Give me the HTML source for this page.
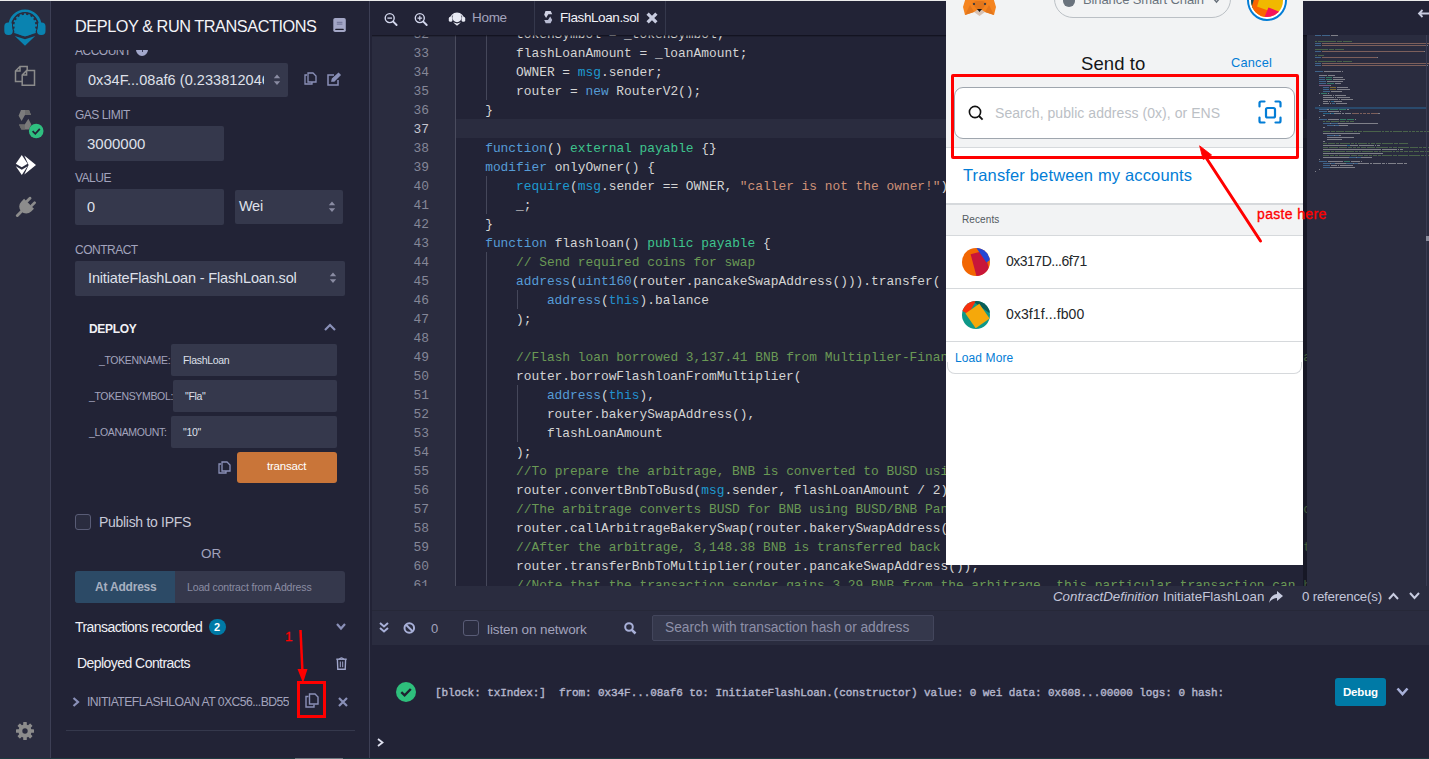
<!DOCTYPE html>
<html><head><meta charset="utf-8">
<style>
*{margin:0;padding:0;box-sizing:border-box}
html,body{width:1429px;height:759px;overflow:hidden;background:#222336;font-family:"Liberation Sans",sans-serif}
.a{position:absolute}
.t{position:absolute;white-space:nowrap;line-height:1}
.inp{position:absolute;background:#35384c;border-radius:2px}
.lbl{color:#a2a3bd;font-size:12px;letter-spacing:-0.5px}
.wt{color:#dfe0ea}
svg{position:absolute;overflow:visible}
.ln{position:absolute;left:0;width:59px;text-align:right;font-family:"Liberation Mono",monospace;font-size:12.9px;line-height:19px;white-space:pre}
.cl{position:absolute;left:84.3px;font-family:"Liberation Mono",monospace;font-size:12.87px;line-height:19px;white-space:pre;color:#d4d4d4}
</style></head><body>
<!-- frame -->
<div class="a" style="left:0;top:0;width:1429px;height:1px;background:#ececec"></div>
<div class="a" style="left:0;top:1px;width:50px;height:758px;background:#2a2c3f"></div>
<div class="a" style="left:50px;top:1px;width:1px;height:758px;background:#3d3f55"></div>
<div class="a" style="left:369px;top:1px;width:1px;height:758px;background:#3d3f55"></div>
<div class="a" style="left:0;top:758px;width:1429px;height:1px;background:#1f3a40"></div>
<div class="a" style="left:295px;top:758px;width:48px;height:1px;background:#6b7a80"></div>

<!-- icon bar -->
<svg style="left:0;top:0" width="50" height="50" viewBox="0 0 50 50">
  <path d="M9.8 26 A15.2 15.2 0 0 1 40.2 26" fill="none" stroke="#0a83b0" stroke-width="2.6"/>
  <rect x="4.3" y="22.5" width="8.5" height="12.5" rx="4" fill="#0a83b0"/>
  <rect x="37" y="22.5" width="8.5" height="12.5" rx="4" fill="#0a83b0"/>
  <circle cx="25" cy="25.6" r="13" fill="#2a2c3f"/>
  <g fill="#0a83b0"><circle cx="25" cy="25.4" r="10.6"/><rect x="23.9" y="13.4" width="2.2" height="2.4" transform="rotate(-112.5 25 25.4)"/><rect x="23.9" y="13.4" width="2.2" height="2.4" transform="rotate(-90 25 25.4)"/><rect x="23.9" y="13.4" width="2.2" height="2.4" transform="rotate(-67.5 25 25.4)"/><rect x="23.9" y="13.4" width="2.2" height="2.4" transform="rotate(-45 25 25.4)"/><rect x="23.9" y="13.4" width="2.2" height="2.4" transform="rotate(-22.5 25 25.4)"/><rect x="23.9" y="13.4" width="2.2" height="2.4" transform="rotate(0 25 25.4)"/><rect x="23.9" y="13.4" width="2.2" height="2.4" transform="rotate(22.5 25 25.4)"/><rect x="23.9" y="13.4" width="2.2" height="2.4" transform="rotate(45 25 25.4)"/><rect x="23.9" y="13.4" width="2.2" height="2.4" transform="rotate(67.5 25 25.4)"/><rect x="23.9" y="13.4" width="2.2" height="2.4" transform="rotate(90 25 25.4)"/><rect x="23.9" y="13.4" width="2.2" height="2.4" transform="rotate(112.5 25 25.4)"/>
  <path d="M14.6 28 L14.2 33 L25 36.6 L35.8 33 L35.4 28 Z"/>
  <path d="M14.8 36 L25 39.2 L35.2 36 L25 45.8 Z"/></g>
</svg>
<svg style="left:0;top:50px" width="50" height="50" viewBox="0 50 50 50" fill="none" stroke="#8c8c8c" stroke-width="1.5">
  <path d="M15.5 71 L20 66.5 L27.2 66.5 L27.2 81.5 L15.5 81.5 Z M15.5 71 L20 71 L20 66.5"/>
  <path d="M22.2 75 L26.6 70.5 L34.5 70.5 L34.5 85.3 L22.2 85.3 Z M22.2 75 L26.6 75 L26.6 70.5" fill="#2a2c3f"/>
</svg>
<svg style="left:0;top:100px" width="50" height="45" viewBox="0 100 50 45">
  <path d="M21 110 L29 110 L31 115 L25 115 L21.6 121 L18.6 115.8 Z" fill="#7c7c7c"/>
  <path d="M25 110 L29 110 L31 115 L25 115 Z" fill="#6c6c6c"/>
  <path d="M28.4 118.7 L31.3 124.5 L28.8 129.6 L21.4 129.6 L19 124.6 L24.7 124.6 Z" fill="#7a7a7a"/>
  <path d="M19 124.6 L24.7 124.6 L25 129.6 L21.4 129.6 Z" fill="#6a6a6a"/>
  <circle cx="36.2" cy="131" r="7.3" fill="#2fbf80"/>
  <path d="M32.6 131.2 L35.3 133.8 L39.8 128.8" fill="none" stroke="#222336" stroke-width="1.8"/>
</svg>
<svg style="left:0;top:150px" width="50" height="30" viewBox="0 150 50 30">
  <path d="M21.8 155 L27.6 163.8 L21.8 167.2 L15.8 163.8 Z" fill="#fff"/>
  <path d="M15.8 166.2 L21.8 169.8 L27.6 166.2 L21.8 175 Z" fill="#fff"/>
  <path d="M24.3 155.5 L36 165 L24.3 174.5 L28.6 165 Z" fill="#fff"/>
</svg>
<svg style="left:0;top:190px" width="50" height="35" viewBox="0 190 50 35">
  <g transform="rotate(45 24.8 208)" fill="#8c8c8c">
    <rect x="20.2" y="196" width="2.8" height="7" rx="1.2"/><rect x="26.6" y="196" width="2.8" height="7" rx="1.2"/>
    <path d="M17.8 202 L31.8 202 L31.8 206 A7 7 0 0 1 24.8 213 A7 7 0 0 1 17.8 206 Z"/>
    <rect x="23.4" y="211" width="2.8" height="9" rx="1.2"/>
  </g>
</svg>
<svg style="left:0;top:715px" width="50" height="30" viewBox="0 715 50 30">
  <g fill="#8c8c8c"><circle cx="25" cy="731" r="6.6"/>
  <g id="gt"><rect x="23.2" y="722" width="3.6" height="4" rx="0.6"/></g>
  <use href="#gt" transform="rotate(45 25 731)"/><use href="#gt" transform="rotate(90 25 731)"/><use href="#gt" transform="rotate(135 25 731)"/>
  <use href="#gt" transform="rotate(180 25 731)"/><use href="#gt" transform="rotate(225 25 731)"/><use href="#gt" transform="rotate(270 25 731)"/><use href="#gt" transform="rotate(315 25 731)"/></g>
  <circle cx="25" cy="731" r="2.7" fill="#2a2c3f"/>
</svg>

<!-- side panel -->
<div class="a" style="left:51px;top:50px;width:318px;height:12px;overflow:hidden">
 <div class="t lbl" style="left:24px;top:-5px">ACCOUNT</div>
 <div class="a" style="left:85px;top:-7px;width:12px;height:13px;border-radius:50%;background:#a3a8cc"></div><div class="a" style="left:90.5px;top:-2px;width:1.4px;height:4px;background:#3a3d58"></div>
</div>
<div class="t wt" style="left:75px;top:18px;font-size:16.3px;letter-spacing:-0.45px;color:#f4f4f8">DEPLOY &amp; RUN TRANSACTIONS</div>
<svg style="left:333px;top:18px" width="13" height="14" viewBox="0 0 13 14"><rect x="0.3" y="0" width="12.5" height="14" rx="1.8" fill="#a3a6c6"/><rect x="3.8" y="3.8" width="5.6" height="1" fill="#6d7094"/><rect x="3.8" y="5.6" width="5.6" height="1" fill="#6d7094"/><rect x="2.2" y="10.8" width="8.6" height="1.3" rx="0.6" fill="#1c1d2c"/></svg>

<div class="inp" style="left:76px;top:63px;width:212px;height:34px"></div>
<div class="a" style="left:88px;top:70px;width:176px;height:20px;overflow:hidden"><div class="t wt" style="left:0;top:3px;font-size:14.5px;letter-spacing:0.05px">0x34F...08af6 (0.233812046</div></div>
<svg style="left:274px;top:74px" width="6" height="12" viewBox="0 0 6 12"><path d="M-0.2 4.3 L3 0.6 L6.2 4.3 Z M-0.2 7.3 L3 11 L6.2 7.3 Z" fill="#8a8ca3"/></svg>
<svg style="left:304px;top:72px" width="13" height="13" viewBox="0 0 13 13" fill="none" stroke="#8a90b8" stroke-width="1.3"><path d="M3 3 L1 3 L1 12 L8 12 L8 10"/><path d="M4 1 L9 1 L12 4 L12 10 L4 10 Z"/></svg>
<svg style="left:327px;top:73px" width="14" height="13" viewBox="0 0 14 13" fill="none" stroke="#8a90b8" stroke-width="1.5"><path d="M7 2 L1 2 L1 12 L11 12 L11 7"/><path d="M5 8 L5.5 6 L11.5 0.5 L13 2 L7 8 Z" fill="#8a90b8"/></svg>

<div class="t lbl" style="left:75px;top:109px">GAS LIMIT</div>
<div class="inp" style="left:75px;top:126px;width:149px;height:35px"></div>
<div class="t wt" style="left:87px;top:136px;font-size:15px">3000000</div>

<div class="t lbl" style="left:75px;top:172px">VALUE</div>
<div class="inp" style="left:75px;top:189px;width:149px;height:36px"></div>
<div class="t wt" style="left:87px;top:200px;font-size:14.5px">0</div>
<div class="inp" style="left:235px;top:190px;width:108px;height:34px"></div>
<div class="t wt" style="left:239px;top:199px;font-size:14.5px;letter-spacing:-0.3px">Wei</div>
<svg style="left:329px;top:201px" width="6" height="12" viewBox="0 0 6 12"><path d="M-0.2 4.3 L3 0.6 L6.2 4.3 Z M-0.2 7.3 L3 11 L6.2 7.3 Z" fill="#8a8ca3"/></svg>

<div class="t lbl" style="left:75px;top:244px">CONTRACT</div>
<div class="inp" style="left:75px;top:261px;width:270px;height:35px"></div>
<div class="t wt" style="left:88px;top:271px;font-size:14.5px;letter-spacing:-0.15px">InitiateFlashLoan - FlashLoan.sol</div>
<svg style="left:330px;top:272px" width="6" height="12" viewBox="0 0 6 12"><path d="M-0.2 4.3 L3 0.6 L6.2 4.3 Z M-0.2 7.3 L3 11 L6.2 7.3 Z" fill="#8a8ca3"/></svg>

<div class="t" style="left:89px;top:323px;font-size:12px;font-weight:bold;color:#f0f0f5;letter-spacing:-0.3px">DEPLOY</div>
<svg style="left:324px;top:323px" width="12" height="8" viewBox="0 0 12 8"><path d="M1 7 L6 2 L11 7" fill="none" stroke="#8a90b8" stroke-width="2.2"/></svg>

<div class="t lbl" style="left:99px;top:355px;font-size:10.5px;letter-spacing:-0.35px">_TOKENNAME:</div>
<div class="inp" style="left:171px;top:344px;width:166px;height:32px"></div>
<div class="t wt" style="left:183px;top:355px;font-size:10.5px;letter-spacing:-0.3px">FlashLoan</div>
<div class="t lbl" style="left:89px;top:391px;font-size:10.5px;letter-spacing:-0.35px">_TOKENSYMBOL:</div>
<div class="inp" style="left:173px;top:380px;width:164px;height:32px"></div>
<div class="t wt" style="left:185px;top:391px;font-size:10.5px;letter-spacing:-0.3px">"Fla"</div>
<div class="t lbl" style="left:89px;top:427px;font-size:10.5px;letter-spacing:-0.35px">_LOANAMOUNT:</div>
<div class="inp" style="left:171px;top:416px;width:166px;height:32px"></div>
<div class="t wt" style="left:183px;top:427px;font-size:10.5px;letter-spacing:-0.3px">"10"</div>

<svg style="left:218px;top:461px" width="13" height="13" viewBox="0 0 13 13" fill="none" stroke="#8a90b8" stroke-width="1.3"><path d="M3 3 L1 3 L1 12 L8 12 L8 10"/><path d="M4 1 L9 1 L12 4 L12 10 L4 10 Z"/></svg>
<div class="a" style="left:237px;top:452px;width:100px;height:31px;background:#c97539;border-radius:3px"></div>
<div class="t" style="left:267px;top:461px;font-size:11.5px;color:#fff;letter-spacing:-0.2px">transact</div>

<div class="a" style="left:75px;top:514px;width:16px;height:16px;border:1px solid #595c76;border-radius:3px;background:#2a2c3f"></div>
<div class="t wt" style="left:99px;top:515px;font-size:14px;letter-spacing:-0.3px;color:#c8c9d8">Publish to IPFS</div>
<div class="t" style="left:201px;top:547px;font-size:13.5px;color:#a2a3bd">OR</div>

<div class="a" style="left:75px;top:571px;width:270px;height:32px;background:#35384c;border-radius:3px"></div>
<div class="a" style="left:75px;top:571px;width:100px;height:32px;background:#2c4a66;border-radius:3px 0 0 3px"></div>
<div class="t" style="left:95px;top:581px;font-size:12px;font-weight:bold;color:#a8b0c0;letter-spacing:-0.2px">At Address</div>
<div class="t" style="left:187px;top:582px;font-size:10.5px;color:#8a8ca3;letter-spacing:-0.15px">Load contract from Address</div>

<div class="t wt" style="left:75px;top:620px;font-size:14px;letter-spacing:-0.55px;color:#f0f0f5">Transactions recorded</div>
<div class="a" style="left:209px;top:619px;width:17px;height:16px;border-radius:8px;background:#007aa6"></div>
<div class="t" style="left:214px;top:622px;font-size:11px;font-weight:bold;color:#fff">2</div>
<svg style="left:336px;top:623px" width="10" height="8" viewBox="0 0 10 8"><path d="M1 1 L5 5.5 L9 1" fill="none" stroke="#8a90b8" stroke-width="2.2"/></svg>

<div class="t wt" style="left:77px;top:656px;font-size:14px;letter-spacing:-0.55px;color:#f0f0f5">Deployed Contracts</div>
<svg style="left:336px;top:656px" width="11" height="14" viewBox="0 0 11 14" fill="none" stroke="#a0a6cc"><path d="M0.3 3.2 L10.7 3.2" stroke-width="1.4"/><path d="M3.3 3.2 Q5.5 0.6 7.7 3.2" stroke-width="1.3"/><path d="M1.4 3.5 L1.8 13.2 L9.2 13.2 L9.6 3.5" stroke-width="1.4"/><path d="M4.3 5.5 L4.3 11.2 M6.7 5.5 L6.7 11.2" stroke-width="1"/></svg>

<svg style="left:72px;top:697px" width="8" height="10" viewBox="0 0 8 10"><path d="M1.5 1 L6 5 L1.5 9" fill="none" stroke="#8a90b8" stroke-width="2.2"/></svg>
<div class="a" style="left:87px;top:692px;width:202px;height:18px;overflow:hidden"><div class="t" style="left:0;top:4px;font-size:12.2px;color:#a2a3bd;letter-spacing:-0.55px">INITIATEFLASHLOAN AT 0XC56...BD55E</div></div>
<svg style="left:305px;top:693px" width="14" height="15" viewBox="0 0 14 15" fill="none" stroke="#8a90b8" stroke-width="1.4"><path d="M3.5 3.5 L1 3.5 L1 14 L9 14 L9 11.5"/><path d="M4.5 1 L10 1 L13 4 L13 11 L4.5 11 Z"/></svg>
<svg style="left:338px;top:697px" width="10" height="10" viewBox="0 0 10 10"><path d="M1 1 L9 9 M9 1 L1 9" stroke="#8a90b8" stroke-width="2.2"/></svg>
<div class="a" style="left:66px;top:730px;width:289px;height:1px;background:#35384c"></div>

<!-- annotation 1 -->
<div class="a" style="left:297px;top:681px;width:29px;height:37px;border:3px solid #ff0000"></div>
<div class="t" style="left:285px;top:630px;font-size:13.5px;color:#ff0000;-webkit-text-stroke:0.3px #ff0000">1</div>
<svg style="left:295px;top:629px" width="15" height="55" viewBox="0 0 15 55"><path d="M5.5 1 L7.5 44" stroke="#ff0000" stroke-width="2.5"/><path d="M2.5 40 L12.5 40 L8 54 Z" fill="#ff0000"/></svg>

<!-- editor -->
<div class="a" style="left:370px;top:1px;width:1059px;height:758px;background:#222336"></div>
<!-- tab bar -->
<div class="a" style="left:370px;top:1px;width:1059px;height:34px;background:#222336"></div>
<svg style="left:380px;top:8px" width="20" height="20" viewBox="380 8 20 20" fill="none" stroke="#d4d8ee"><circle cx="389.7" cy="18.1" r="4.5" stroke-width="1.4"/><path d="M387.4 18.1 L392 18.1" stroke-width="1.3"/><path d="M393.2 21.6 L396.6 25" stroke-width="1.9" stroke-linecap="round"/></svg>
<svg style="left:410px;top:8px" width="20" height="20" viewBox="410 8 20 20" fill="none" stroke="#d4d8ee"><circle cx="419.8" cy="18.1" r="4.5" stroke-width="1.4"/><path d="M417.5 18.1 L422.1 18.1 M419.8 15.8 L419.8 20.4" stroke-width="1.2"/><path d="M423.3 21.6 L426.7 25" stroke-width="1.9" stroke-linecap="round"/></svg>
<svg style="left:440px;top:0" width="30" height="30" viewBox="440 0 30 30">
  <path d="M450.2 20 A6.8 6.8 0 0 1 463.8 20" fill="none" stroke="#e8eaf4" stroke-width="1.2"/>
  <rect x="448.8" y="16.8" width="3.6" height="5" rx="1.6" fill="#e8eaf4"/><rect x="461.6" y="16.8" width="3.6" height="5" rx="1.6" fill="#e8eaf4"/>
  <circle cx="457" cy="17.6" r="4.6" fill="#e8eaf4"/>
  <path d="M453 22.3 L457 23.6 L461 22.3 L457 25.8 Z" fill="#e8eaf4"/>
</svg>
<div class="t" style="left:472px;top:11px;font-size:13.5px;color:#a2a3bd;letter-spacing:-0.3px">Home</div>
<div class="a" style="left:534px;top:1px;width:1px;height:34px;background:#35384c"></div>
<svg style="left:540px;top:8px" width="16" height="18" viewBox="540 8 16 18">
  <path d="M545.5 11 L550.7 11 L552.2 14.3 L548.3 14.3 L546.1 18 L544.2 14.8 Z" fill="#d0d2e4"/>
  <path d="M550.2 16.4 L552.2 20 L550.5 23.3 L545.7 23.3 L544.2 20 L548 20 Z" fill="#b8bbd2"/>
</svg>
<div class="t" style="left:560px;top:11px;font-size:13.5px;color:#f2f2f8;letter-spacing:-0.4px">FlashLoan.sol</div>
<svg style="left:645.5px;top:12px" width="12" height="12" viewBox="0 0 12 12"><path d="M1.6 1.6 L10.4 10.4 M10.4 1.6 L1.6 10.4" stroke="#c8cce0" stroke-width="3.2"/></svg>
<div class="a" style="left:665px;top:1px;width:1px;height:34px;background:#35384c"></div>

<!-- code area -->
<div class="a" style="left:370px;top:35px;width:1059px;height:551px;overflow:hidden;background:#222336">
  <div class="a" style="left:2px;top:0;width:83px;height:552px;background:#2a2c3f"></div>
  <div class="a" style="left:86px;top:84px;width:1000px;height:19px;background:#2a2c3f"></div>
  <div id="code">
<div class="a" style="left:85.0px;top:-11px;width:1px;height:570px;background:#4a4c5e"></div>
<div class="a" style="left:116.0px;top:-11px;width:1px;height:76px;background:#45475a"></div>
<div class="a" style="left:116.0px;top:141px;width:1px;height:38px;background:#45475a"></div>
<div class="a" style="left:116.0px;top:217px;width:1px;height:342px;background:#45475a"></div>
<div class="a" style="left:147.0px;top:255px;width:1px;height:19px;background:#45475a"></div>
<div class="a" style="left:147.0px;top:350px;width:1px;height:57px;background:#45475a"></div>
<div class="ln" style="top:-10px;color:#858798">32</div>
<div class="cl" style="top:-10px">        tokenSymbol = _tokenSymbol;</div>
<div class="ln" style="top:9px;color:#858798">33</div>
<div class="cl" style="top:9px">        flashLoanAmount = _loanAmount;</div>
<div class="ln" style="top:28px;color:#858798">34</div>
<div class="cl" style="top:28px">        OWNER = <span style="color:#1e9ad0">msg</span>.sender;</div>
<div class="ln" style="top:47px;color:#858798">35</div>
<div class="cl" style="top:47px">        router = <span style="color:#569cd6">new</span> RouterV2();</div>
<div class="ln" style="top:66px;color:#858798">36</div>
<div class="cl" style="top:66px">    }</div>
<div class="ln" style="top:85px;color:#c6c6d0">37</div>
<div class="cl" style="top:85px"></div>
<div class="ln" style="top:104px;color:#858798">38</div>
<div class="cl" style="top:104px">    <span style="color:#569cd6">function</span>() <span style="color:#3ec58e">external</span> <span style="color:#3ec58e">payable</span> {}</div>
<div class="ln" style="top:123px;color:#858798">39</div>
<div class="cl" style="top:123px">    <span style="color:#569cd6">modifier</span> onlyOwner() {</div>
<div class="ln" style="top:142px;color:#858798">40</div>
<div class="cl" style="top:142px">        <span style="color:#1e9ad0">require</span>(<span style="color:#1e9ad0">msg</span>.sender == OWNER, <span style="color:#ce9178">&quot;caller is not the owner!&quot;</span>);</div>
<div class="ln" style="top:161px;color:#858798">41</div>
<div class="cl" style="top:161px">        _;</div>
<div class="ln" style="top:180px;color:#858798">42</div>
<div class="cl" style="top:180px">    }</div>
<div class="ln" style="top:199px;color:#858798">43</div>
<div class="cl" style="top:199px">    <span style="color:#569cd6">function</span> flashloan() <span style="color:#3ec58e">public</span> <span style="color:#3ec58e">payable</span> {</div>
<div class="ln" style="top:218px;color:#858798">44</div>
<div class="cl" style="top:218px">        <span style="color:#6a9955">// Send required coins for swap</span></div>
<div class="ln" style="top:237px;color:#858798">45</div>
<div class="cl" style="top:237px">        <span style="color:#569cd6">address</span>(<span style="color:#569cd6">uint160</span>(router.pancakeSwapAddress())).transfer(</div>
<div class="ln" style="top:256px;color:#858798">46</div>
<div class="cl" style="top:256px">            <span style="color:#569cd6">address</span>(<span style="color:#2291d0">this</span>).balance</div>
<div class="ln" style="top:275px;color:#858798">47</div>
<div class="cl" style="top:275px">        );</div>
<div class="ln" style="top:294px;color:#858798">48</div>
<div class="cl" style="top:294px"></div>
<div class="ln" style="top:313px;color:#858798">49</div>
<div class="cl" style="top:313px">        <span style="color:#6a9955">//Flash loan borrowed 3,137.41 BNB from Multiplier-Finance to make an arbitrage trade on the AMM DEX PancakeSwap.</span></div>
<div class="ln" style="top:332px;color:#858798">50</div>
<div class="cl" style="top:332px">        router.borrowFlashloanFromMultiplier(</div>
<div class="ln" style="top:351px;color:#858798">51</div>
<div class="cl" style="top:351px">            <span style="color:#569cd6">address</span>(<span style="color:#2291d0">this</span>),</div>
<div class="ln" style="top:370px;color:#858798">52</div>
<div class="cl" style="top:370px">            router.bakerySwapAddress(),</div>
<div class="ln" style="top:389px;color:#858798">53</div>
<div class="cl" style="top:389px">            flashLoanAmount</div>
<div class="ln" style="top:408px;color:#858798">54</div>
<div class="cl" style="top:408px">        );</div>
<div class="ln" style="top:427px;color:#858798">55</div>
<div class="cl" style="top:427px">        <span style="color:#6a9955">//To prepare the arbitrage, BNB is converted to BUSD using PancakeSwap swap contract.</span></div>
<div class="ln" style="top:446px;color:#858798">56</div>
<div class="cl" style="top:446px">        router.convertBnbToBusd(<span style="color:#1e9ad0">msg</span>.sender, flashLoanAmount / 2);</div>
<div class="ln" style="top:465px;color:#858798">57</div>
<div class="cl" style="top:465px">        <span style="color:#6a9955">//The arbitrage converts BUSD for BNB using BUSD/BNB PancakeSwap, and then immediately converts BNB back to 3,148.38 BNB using BNB/BUSD BakerySwap.</span></div>
<div class="ln" style="top:484px;color:#858798">58</div>
<div class="cl" style="top:484px">        router.callArbitrageBakerySwap(router.bakerySwapAddress(), flashLoanAmount / 2);</div>
<div class="ln" style="top:503px;color:#858798">59</div>
<div class="cl" style="top:503px">        <span style="color:#6a9955">//After the arbitrage, 3,148.38 BNB is transferred back to Multiplier to pay the loan plus fees. This transaction costs 0.2 BNB of gas.</span></div>
<div class="ln" style="top:522px;color:#858798">60</div>
<div class="cl" style="top:522px">        router.transferBnbToMultiplier(router.pancakeSwapAddress());</div>
<div class="ln" style="top:541px;color:#858798">61</div>
<div class="cl" style="top:541px">        <span style="color:#6a9955">//Note that the transaction sender gains 3.29 BNB from the arbitrage, this particular transaction can be repeated as price changes all the time.</span></div>
</div>
</div>


<div class="a" style="left:372px;top:35px;width:1057px;height:1px;background:rgba(8,8,16,0.55)"></div>
<div class="a" style="left:372px;top:36px;width:1057px;height:1px;background:rgba(8,8,16,0.2)"></div>
<!-- minimap -->
<div class="a" style="left:1303px;top:35px;width:4px;height:551px;background:rgba(10,10,20,0.45)"></div>
<div class="a" style="left:1307px;top:35px;width:122px;height:552px;background:#2a2c3f;overflow:hidden" id="minimap">
<div class="a" style="left:8px;top:72px;width:111px;height:2px;background:#2a4a6c"></div>
<div class="a" style="left:8px;top:0px;width:6px;height:1px;background:#569cd6;opacity:.5"></div>
<div class="a" style="left:15px;top:0px;width:8px;height:1px;background:#569cd6;opacity:.5"></div>
<div class="a" style="left:24px;top:0px;width:1px;height:1px;background:#d4d4d4;opacity:.5"></div>
<div class="a" style="left:25px;top:0px;width:1px;height:1px;background:#d4d4d4;opacity:.5"></div>
<div class="a" style="left:26px;top:0px;width:1px;height:1px;background:#d4d4d4;opacity:.5"></div>
<div class="a" style="left:27px;top:0px;width:1px;height:1px;background:#d4d4d4;opacity:.5"></div>
<div class="a" style="left:28px;top:0px;width:1px;height:1px;background:#d4d4d4;opacity:.5"></div>
<div class="a" style="left:29px;top:0px;width:1px;height:1px;background:#d4d4d4;opacity:.5"></div>
<div class="a" style="left:30px;top:0px;width:1px;height:1px;background:#d4d4d4;opacity:.5"></div>
<div class="a" style="left:8px;top:6px;width:2px;height:1px;background:#6a9955;opacity:.5"></div>
<div class="a" style="left:11px;top:6px;width:18px;height:1px;background:#6a9955;opacity:.5"></div>
<div class="a" style="left:30px;top:6px;width:5px;height:1px;background:#6a9955;opacity:.5"></div>
<div class="a" style="left:36px;top:6px;width:9px;height:1px;background:#6a9955;opacity:.5"></div>
<div class="a" style="left:8px;top:8px;width:6px;height:1px;background:#569cd6;opacity:.5"></div>
<div class="a" style="left:15px;top:8px;width:122px;height:1px;background:#ce9178;opacity:.5"></div>
<div class="a" style="left:137px;top:8px;width:1px;height:1px;background:#d4d4d4;opacity:.5"></div>
<div class="a" style="left:8px;top:10px;width:6px;height:1px;background:#569cd6;opacity:.5"></div>
<div class="a" style="left:15px;top:10px;width:105px;height:1px;background:#ce9178;opacity:.5"></div>
<div class="a" style="left:120px;top:10px;width:1px;height:1px;background:#d4d4d4;opacity:.5"></div>
<div class="a" style="left:8px;top:14px;width:13px;height:1px;background:#6a9955;opacity:.5"></div>
<div class="a" style="left:22px;top:14px;width:5px;height:1px;background:#6a9955;opacity:.5"></div>
<div class="a" style="left:28px;top:14px;width:9px;height:1px;background:#6a9955;opacity:.5"></div>
<div class="a" style="left:8px;top:16px;width:6px;height:1px;background:#569cd6;opacity:.5"></div>
<div class="a" style="left:15px;top:16px;width:102px;height:1px;background:#ce9178;opacity:.5"></div>
<div class="a" style="left:117px;top:16px;width:1px;height:1px;background:#d4d4d4;opacity:.5"></div>
<div class="a" style="left:8px;top:20px;width:2px;height:1px;background:#6a9955;opacity:.5"></div>
<div class="a" style="left:11px;top:20px;width:6px;height:1px;background:#6a9955;opacity:.5"></div>
<div class="a" style="left:8px;top:22px;width:6px;height:1px;background:#569cd6;opacity:.5"></div>
<div class="a" style="left:15px;top:22px;width:55px;height:1px;background:#ce9178;opacity:.5"></div>
<div class="a" style="left:70px;top:22px;width:1px;height:1px;background:#d4d4d4;opacity:.5"></div>
<div class="a" style="left:8px;top:26px;width:2px;height:1px;background:#6a9955;opacity:.5"></div>
<div class="a" style="left:11px;top:26px;width:18px;height:1px;background:#6a9955;opacity:.5"></div>
<div class="a" style="left:30px;top:26px;width:5px;height:1px;background:#6a9955;opacity:.5"></div>
<div class="a" style="left:36px;top:26px;width:9px;height:1px;background:#6a9955;opacity:.5"></div>
<div class="a" style="left:8px;top:28px;width:6px;height:1px;background:#569cd6;opacity:.5"></div>
<div class="a" style="left:15px;top:28px;width:122px;height:1px;background:#ce9178;opacity:.5"></div>
<div class="a" style="left:137px;top:28px;width:1px;height:1px;background:#d4d4d4;opacity:.5"></div>
<div class="a" style="left:8px;top:30px;width:6px;height:1px;background:#569cd6;opacity:.5"></div>
<div class="a" style="left:15px;top:30px;width:105px;height:1px;background:#ce9178;opacity:.5"></div>
<div class="a" style="left:120px;top:30px;width:1px;height:1px;background:#d4d4d4;opacity:.5"></div>
<div class="a" style="left:8px;top:36px;width:8px;height:1px;background:#569cd6;opacity:.5"></div>
<div class="a" style="left:17px;top:36px;width:17px;height:1px;background:#d4d4d4;opacity:.5"></div>
<div class="a" style="left:35px;top:36px;width:1px;height:1px;background:#d4d4d4;opacity:.5"></div>
<div class="a" style="left:12px;top:40px;width:8px;height:1px;background:#d4d4d4;opacity:.5"></div>
<div class="a" style="left:21px;top:40px;width:6px;height:1px;background:#d4d4d4;opacity:.5"></div>
<div class="a" style="left:27px;top:40px;width:1px;height:1px;background:#d4d4d4;opacity:.5"></div>
<div class="a" style="left:12px;top:42px;width:6px;height:1px;background:#569cd6;opacity:.5"></div>
<div class="a" style="left:19px;top:42px;width:6px;height:1px;background:#3ec58e;opacity:.5"></div>
<div class="a" style="left:26px;top:42px;width:9px;height:1px;background:#d4d4d4;opacity:.5"></div>
<div class="a" style="left:35px;top:42px;width:1px;height:1px;background:#d4d4d4;opacity:.5"></div>
<div class="a" style="left:12px;top:44px;width:6px;height:1px;background:#569cd6;opacity:.5"></div>
<div class="a" style="left:19px;top:44px;width:6px;height:1px;background:#3ec58e;opacity:.5"></div>
<div class="a" style="left:26px;top:44px;width:11px;height:1px;background:#d4d4d4;opacity:.5"></div>
<div class="a" style="left:37px;top:44px;width:1px;height:1px;background:#d4d4d4;opacity:.5"></div>
<div class="a" style="left:12px;top:46px;width:7px;height:1px;background:#569cd6;opacity:.5"></div>
<div class="a" style="left:20px;top:46px;width:15px;height:1px;background:#d4d4d4;opacity:.5"></div>
<div class="a" style="left:35px;top:46px;width:1px;height:1px;background:#d4d4d4;opacity:.5"></div>
<div class="a" style="left:12px;top:48px;width:7px;height:1px;background:#569cd6;opacity:.5"></div>
<div class="a" style="left:20px;top:48px;width:7px;height:1px;background:#3ec58e;opacity:.5"></div>
<div class="a" style="left:28px;top:48px;width:5px;height:1px;background:#d4d4d4;opacity:.5"></div>
<div class="a" style="left:33px;top:48px;width:1px;height:1px;background:#d4d4d4;opacity:.5"></div>
<div class="a" style="left:12px;top:50px;width:11px;height:1px;background:#c586c0;opacity:.5"></div>
<div class="a" style="left:23px;top:50px;width:1px;height:1px;background:#d4d4d4;opacity:.5"></div>
<div class="a" style="left:16px;top:52px;width:6px;height:1px;background:#569cd6;opacity:.5"></div>
<div class="a" style="left:23px;top:52px;width:6px;height:1px;background:#c9a227;opacity:.5"></div>
<div class="a" style="left:30px;top:52px;width:10px;height:1px;background:#d4d4d4;opacity:.5"></div>
<div class="a" style="left:40px;top:52px;width:1px;height:1px;background:#d4d4d4;opacity:.5"></div>
<div class="a" style="left:16px;top:54px;width:6px;height:1px;background:#569cd6;opacity:.5"></div>
<div class="a" style="left:23px;top:54px;width:6px;height:1px;background:#c9a227;opacity:.5"></div>
<div class="a" style="left:30px;top:54px;width:12px;height:1px;background:#d4d4d4;opacity:.5"></div>
<div class="a" style="left:42px;top:54px;width:1px;height:1px;background:#d4d4d4;opacity:.5"></div>
<div class="a" style="left:16px;top:56px;width:7px;height:1px;background:#569cd6;opacity:.5"></div>
<div class="a" style="left:24px;top:56px;width:11px;height:1px;background:#d4d4d4;opacity:.5"></div>
<div class="a" style="left:12px;top:58px;width:1px;height:1px;background:#d4d4d4;opacity:.5"></div>
<div class="a" style="left:14px;top:58px;width:6px;height:1px;background:#3ec58e;opacity:.5"></div>
<div class="a" style="left:21px;top:58px;width:1px;height:1px;background:#d4d4d4;opacity:.5"></div>
<div class="a" style="left:16px;top:60px;width:9px;height:1px;background:#d4d4d4;opacity:.5"></div>
<div class="a" style="left:26px;top:60px;width:1px;height:1px;background:#d4d4d4;opacity:.5"></div>
<div class="a" style="left:28px;top:60px;width:10px;height:1px;background:#d4d4d4;opacity:.5"></div>
<div class="a" style="left:38px;top:60px;width:1px;height:1px;background:#d4d4d4;opacity:.5"></div>
<div class="a" style="left:16px;top:62px;width:11px;height:1px;background:#d4d4d4;opacity:.5"></div>
<div class="a" style="left:28px;top:62px;width:1px;height:1px;background:#d4d4d4;opacity:.5"></div>
<div class="a" style="left:30px;top:62px;width:12px;height:1px;background:#d4d4d4;opacity:.5"></div>
<div class="a" style="left:42px;top:62px;width:1px;height:1px;background:#d4d4d4;opacity:.5"></div>
<div class="a" style="left:16px;top:64px;width:15px;height:1px;background:#d4d4d4;opacity:.5"></div>
<div class="a" style="left:32px;top:64px;width:1px;height:1px;background:#d4d4d4;opacity:.5"></div>
<div class="a" style="left:34px;top:64px;width:11px;height:1px;background:#d4d4d4;opacity:.5"></div>
<div class="a" style="left:45px;top:64px;width:1px;height:1px;background:#d4d4d4;opacity:.5"></div>
<div class="a" style="left:16px;top:66px;width:5px;height:1px;background:#d4d4d4;opacity:.5"></div>
<div class="a" style="left:22px;top:66px;width:1px;height:1px;background:#d4d4d4;opacity:.5"></div>
<div class="a" style="left:24px;top:66px;width:3px;height:1px;background:#1e9ad0;opacity:.5"></div>
<div class="a" style="left:27px;top:66px;width:1px;height:1px;background:#d4d4d4;opacity:.5"></div>
<div class="a" style="left:28px;top:66px;width:6px;height:1px;background:#d4d4d4;opacity:.5"></div>
<div class="a" style="left:34px;top:66px;width:1px;height:1px;background:#d4d4d4;opacity:.5"></div>
<div class="a" style="left:16px;top:68px;width:6px;height:1px;background:#d4d4d4;opacity:.5"></div>
<div class="a" style="left:23px;top:68px;width:1px;height:1px;background:#d4d4d4;opacity:.5"></div>
<div class="a" style="left:25px;top:68px;width:3px;height:1px;background:#569cd6;opacity:.5"></div>
<div class="a" style="left:29px;top:68px;width:8px;height:1px;background:#d4d4d4;opacity:.5"></div>
<div class="a" style="left:37px;top:68px;width:1px;height:1px;background:#d4d4d4;opacity:.5"></div>
<div class="a" style="left:38px;top:68px;width:1px;height:1px;background:#d4d4d4;opacity:.5"></div>
<div class="a" style="left:39px;top:68px;width:1px;height:1px;background:#d4d4d4;opacity:.5"></div>
<div class="a" style="left:12px;top:70px;width:1px;height:1px;background:#d4d4d4;opacity:.5"></div>
<div class="a" style="left:12px;top:74px;width:8px;height:1px;background:#569cd6;opacity:.5"></div>
<div class="a" style="left:20px;top:74px;width:1px;height:1px;background:#d4d4d4;opacity:.5"></div>
<div class="a" style="left:21px;top:74px;width:1px;height:1px;background:#d4d4d4;opacity:.5"></div>
<div class="a" style="left:23px;top:74px;width:8px;height:1px;background:#3ec58e;opacity:.5"></div>
<div class="a" style="left:32px;top:74px;width:7px;height:1px;background:#3ec58e;opacity:.5"></div>
<div class="a" style="left:40px;top:74px;width:1px;height:1px;background:#d4d4d4;opacity:.5"></div>
<div class="a" style="left:41px;top:74px;width:1px;height:1px;background:#d4d4d4;opacity:.5"></div>
<div class="a" style="left:12px;top:76px;width:8px;height:1px;background:#569cd6;opacity:.5"></div>
<div class="a" style="left:21px;top:76px;width:9px;height:1px;background:#d4d4d4;opacity:.5"></div>
<div class="a" style="left:30px;top:76px;width:1px;height:1px;background:#d4d4d4;opacity:.5"></div>
<div class="a" style="left:31px;top:76px;width:1px;height:1px;background:#d4d4d4;opacity:.5"></div>
<div class="a" style="left:33px;top:76px;width:1px;height:1px;background:#d4d4d4;opacity:.5"></div>
<div class="a" style="left:16px;top:78px;width:7px;height:1px;background:#1e9ad0;opacity:.5"></div>
<div class="a" style="left:23px;top:78px;width:1px;height:1px;background:#d4d4d4;opacity:.5"></div>
<div class="a" style="left:24px;top:78px;width:3px;height:1px;background:#1e9ad0;opacity:.5"></div>
<div class="a" style="left:27px;top:78px;width:1px;height:1px;background:#d4d4d4;opacity:.5"></div>
<div class="a" style="left:28px;top:78px;width:6px;height:1px;background:#d4d4d4;opacity:.5"></div>
<div class="a" style="left:35px;top:78px;width:1px;height:1px;background:#d4d4d4;opacity:.5"></div>
<div class="a" style="left:36px;top:78px;width:1px;height:1px;background:#d4d4d4;opacity:.5"></div>
<div class="a" style="left:38px;top:78px;width:5px;height:1px;background:#d4d4d4;opacity:.5"></div>
<div class="a" style="left:43px;top:78px;width:1px;height:1px;background:#d4d4d4;opacity:.5"></div>
<div class="a" style="left:45px;top:78px;width:7px;height:1px;background:#ce9178;opacity:.5"></div>
<div class="a" style="left:53px;top:78px;width:2px;height:1px;background:#ce9178;opacity:.5"></div>
<div class="a" style="left:56px;top:78px;width:3px;height:1px;background:#ce9178;opacity:.5"></div>
<div class="a" style="left:60px;top:78px;width:3px;height:1px;background:#ce9178;opacity:.5"></div>
<div class="a" style="left:64px;top:78px;width:7px;height:1px;background:#ce9178;opacity:.5"></div>
<div class="a" style="left:71px;top:78px;width:1px;height:1px;background:#d4d4d4;opacity:.5"></div>
<div class="a" style="left:72px;top:78px;width:1px;height:1px;background:#d4d4d4;opacity:.5"></div>
<div class="a" style="left:16px;top:80px;width:1px;height:1px;background:#d4d4d4;opacity:.5"></div>
<div class="a" style="left:17px;top:80px;width:1px;height:1px;background:#d4d4d4;opacity:.5"></div>
<div class="a" style="left:12px;top:82px;width:1px;height:1px;background:#d4d4d4;opacity:.5"></div>
<div class="a" style="left:12px;top:84px;width:8px;height:1px;background:#569cd6;opacity:.5"></div>
<div class="a" style="left:21px;top:84px;width:9px;height:1px;background:#d4d4d4;opacity:.5"></div>
<div class="a" style="left:30px;top:84px;width:1px;height:1px;background:#d4d4d4;opacity:.5"></div>
<div class="a" style="left:31px;top:84px;width:1px;height:1px;background:#d4d4d4;opacity:.5"></div>
<div class="a" style="left:33px;top:84px;width:6px;height:1px;background:#3ec58e;opacity:.5"></div>
<div class="a" style="left:40px;top:84px;width:7px;height:1px;background:#3ec58e;opacity:.5"></div>
<div class="a" style="left:48px;top:84px;width:1px;height:1px;background:#d4d4d4;opacity:.5"></div>
<div class="a" style="left:16px;top:86px;width:2px;height:1px;background:#6a9955;opacity:.5"></div>
<div class="a" style="left:19px;top:86px;width:4px;height:1px;background:#6a9955;opacity:.5"></div>
<div class="a" style="left:24px;top:86px;width:8px;height:1px;background:#6a9955;opacity:.5"></div>
<div class="a" style="left:33px;top:86px;width:5px;height:1px;background:#6a9955;opacity:.5"></div>
<div class="a" style="left:39px;top:86px;width:3px;height:1px;background:#6a9955;opacity:.5"></div>
<div class="a" style="left:43px;top:86px;width:4px;height:1px;background:#6a9955;opacity:.5"></div>
<div class="a" style="left:16px;top:88px;width:7px;height:1px;background:#569cd6;opacity:.5"></div>
<div class="a" style="left:23px;top:88px;width:1px;height:1px;background:#d4d4d4;opacity:.5"></div>
<div class="a" style="left:24px;top:88px;width:7px;height:1px;background:#569cd6;opacity:.5"></div>
<div class="a" style="left:31px;top:88px;width:1px;height:1px;background:#d4d4d4;opacity:.5"></div>
<div class="a" style="left:32px;top:88px;width:6px;height:1px;background:#d4d4d4;opacity:.5"></div>
<div class="a" style="left:38px;top:88px;width:1px;height:1px;background:#d4d4d4;opacity:.5"></div>
<div class="a" style="left:39px;top:88px;width:18px;height:1px;background:#d4d4d4;opacity:.5"></div>
<div class="a" style="left:57px;top:88px;width:1px;height:1px;background:#d4d4d4;opacity:.5"></div>
<div class="a" style="left:58px;top:88px;width:1px;height:1px;background:#d4d4d4;opacity:.5"></div>
<div class="a" style="left:59px;top:88px;width:1px;height:1px;background:#d4d4d4;opacity:.5"></div>
<div class="a" style="left:60px;top:88px;width:1px;height:1px;background:#d4d4d4;opacity:.5"></div>
<div class="a" style="left:61px;top:88px;width:1px;height:1px;background:#d4d4d4;opacity:.5"></div>
<div class="a" style="left:62px;top:88px;width:8px;height:1px;background:#d4d4d4;opacity:.5"></div>
<div class="a" style="left:70px;top:88px;width:1px;height:1px;background:#d4d4d4;opacity:.5"></div>
<div class="a" style="left:20px;top:90px;width:7px;height:1px;background:#569cd6;opacity:.5"></div>
<div class="a" style="left:27px;top:90px;width:1px;height:1px;background:#d4d4d4;opacity:.5"></div>
<div class="a" style="left:28px;top:90px;width:4px;height:1px;background:#569cd6;opacity:.5"></div>
<div class="a" style="left:32px;top:90px;width:1px;height:1px;background:#d4d4d4;opacity:.5"></div>
<div class="a" style="left:33px;top:90px;width:1px;height:1px;background:#d4d4d4;opacity:.5"></div>
<div class="a" style="left:34px;top:90px;width:7px;height:1px;background:#d4d4d4;opacity:.5"></div>
<div class="a" style="left:16px;top:92px;width:1px;height:1px;background:#d4d4d4;opacity:.5"></div>
<div class="a" style="left:17px;top:92px;width:1px;height:1px;background:#d4d4d4;opacity:.5"></div>
<div class="a" style="left:16px;top:96px;width:7px;height:1px;background:#6a9955;opacity:.5"></div>
<div class="a" style="left:24px;top:96px;width:4px;height:1px;background:#6a9955;opacity:.5"></div>
<div class="a" style="left:29px;top:96px;width:8px;height:1px;background:#6a9955;opacity:.5"></div>
<div class="a" style="left:38px;top:96px;width:8px;height:1px;background:#6a9955;opacity:.5"></div>
<div class="a" style="left:47px;top:96px;width:3px;height:1px;background:#6a9955;opacity:.5"></div>
<div class="a" style="left:51px;top:96px;width:4px;height:1px;background:#6a9955;opacity:.5"></div>
<div class="a" style="left:56px;top:96px;width:18px;height:1px;background:#6a9955;opacity:.5"></div>
<div class="a" style="left:75px;top:96px;width:2px;height:1px;background:#6a9955;opacity:.5"></div>
<div class="a" style="left:78px;top:96px;width:4px;height:1px;background:#6a9955;opacity:.5"></div>
<div class="a" style="left:83px;top:96px;width:2px;height:1px;background:#6a9955;opacity:.5"></div>
<div class="a" style="left:86px;top:96px;width:9px;height:1px;background:#6a9955;opacity:.5"></div>
<div class="a" style="left:96px;top:96px;width:5px;height:1px;background:#6a9955;opacity:.5"></div>
<div class="a" style="left:102px;top:96px;width:2px;height:1px;background:#6a9955;opacity:.5"></div>
<div class="a" style="left:105px;top:96px;width:3px;height:1px;background:#6a9955;opacity:.5"></div>
<div class="a" style="left:109px;top:96px;width:3px;height:1px;background:#6a9955;opacity:.5"></div>
<div class="a" style="left:113px;top:96px;width:3px;height:1px;background:#6a9955;opacity:.5"></div>
<div class="a" style="left:117px;top:96px;width:12px;height:1px;background:#6a9955;opacity:.5"></div>
<div class="a" style="left:16px;top:98px;width:6px;height:1px;background:#d4d4d4;opacity:.5"></div>
<div class="a" style="left:22px;top:98px;width:1px;height:1px;background:#d4d4d4;opacity:.5"></div>
<div class="a" style="left:23px;top:98px;width:29px;height:1px;background:#d4d4d4;opacity:.5"></div>
<div class="a" style="left:52px;top:98px;width:1px;height:1px;background:#d4d4d4;opacity:.5"></div>
<div class="a" style="left:20px;top:100px;width:7px;height:1px;background:#569cd6;opacity:.5"></div>
<div class="a" style="left:27px;top:100px;width:1px;height:1px;background:#d4d4d4;opacity:.5"></div>
<div class="a" style="left:28px;top:100px;width:4px;height:1px;background:#569cd6;opacity:.5"></div>
<div class="a" style="left:32px;top:100px;width:1px;height:1px;background:#d4d4d4;opacity:.5"></div>
<div class="a" style="left:33px;top:100px;width:1px;height:1px;background:#d4d4d4;opacity:.5"></div>
<div class="a" style="left:20px;top:102px;width:6px;height:1px;background:#d4d4d4;opacity:.5"></div>
<div class="a" style="left:26px;top:102px;width:1px;height:1px;background:#d4d4d4;opacity:.5"></div>
<div class="a" style="left:27px;top:102px;width:17px;height:1px;background:#d4d4d4;opacity:.5"></div>
<div class="a" style="left:44px;top:102px;width:1px;height:1px;background:#d4d4d4;opacity:.5"></div>
<div class="a" style="left:45px;top:102px;width:1px;height:1px;background:#d4d4d4;opacity:.5"></div>
<div class="a" style="left:46px;top:102px;width:1px;height:1px;background:#d4d4d4;opacity:.5"></div>
<div class="a" style="left:20px;top:104px;width:15px;height:1px;background:#d4d4d4;opacity:.5"></div>
<div class="a" style="left:16px;top:106px;width:1px;height:1px;background:#d4d4d4;opacity:.5"></div>
<div class="a" style="left:17px;top:106px;width:1px;height:1px;background:#d4d4d4;opacity:.5"></div>
<div class="a" style="left:16px;top:108px;width:4px;height:1px;background:#6a9955;opacity:.5"></div>
<div class="a" style="left:21px;top:108px;width:7px;height:1px;background:#6a9955;opacity:.5"></div>
<div class="a" style="left:29px;top:108px;width:3px;height:1px;background:#6a9955;opacity:.5"></div>
<div class="a" style="left:33px;top:108px;width:10px;height:1px;background:#6a9955;opacity:.5"></div>
<div class="a" style="left:44px;top:108px;width:3px;height:1px;background:#6a9955;opacity:.5"></div>
<div class="a" style="left:48px;top:108px;width:2px;height:1px;background:#6a9955;opacity:.5"></div>
<div class="a" style="left:51px;top:108px;width:9px;height:1px;background:#6a9955;opacity:.5"></div>
<div class="a" style="left:61px;top:108px;width:2px;height:1px;background:#6a9955;opacity:.5"></div>
<div class="a" style="left:64px;top:108px;width:4px;height:1px;background:#6a9955;opacity:.5"></div>
<div class="a" style="left:69px;top:108px;width:5px;height:1px;background:#6a9955;opacity:.5"></div>
<div class="a" style="left:75px;top:108px;width:11px;height:1px;background:#6a9955;opacity:.5"></div>
<div class="a" style="left:87px;top:108px;width:4px;height:1px;background:#6a9955;opacity:.5"></div>
<div class="a" style="left:92px;top:108px;width:9px;height:1px;background:#6a9955;opacity:.5"></div>
<div class="a" style="left:16px;top:110px;width:6px;height:1px;background:#d4d4d4;opacity:.5"></div>
<div class="a" style="left:22px;top:110px;width:1px;height:1px;background:#d4d4d4;opacity:.5"></div>
<div class="a" style="left:23px;top:110px;width:16px;height:1px;background:#d4d4d4;opacity:.5"></div>
<div class="a" style="left:39px;top:110px;width:1px;height:1px;background:#d4d4d4;opacity:.5"></div>
<div class="a" style="left:40px;top:110px;width:3px;height:1px;background:#1e9ad0;opacity:.5"></div>
<div class="a" style="left:43px;top:110px;width:1px;height:1px;background:#d4d4d4;opacity:.5"></div>
<div class="a" style="left:44px;top:110px;width:6px;height:1px;background:#d4d4d4;opacity:.5"></div>
<div class="a" style="left:50px;top:110px;width:1px;height:1px;background:#d4d4d4;opacity:.5"></div>
<div class="a" style="left:52px;top:110px;width:15px;height:1px;background:#d4d4d4;opacity:.5"></div>
<div class="a" style="left:68px;top:110px;width:1px;height:1px;background:#d4d4d4;opacity:.5"></div>
<div class="a" style="left:70px;top:110px;width:1px;height:1px;background:#d4d4d4;opacity:.5"></div>
<div class="a" style="left:71px;top:110px;width:1px;height:1px;background:#d4d4d4;opacity:.5"></div>
<div class="a" style="left:72px;top:110px;width:1px;height:1px;background:#d4d4d4;opacity:.5"></div>
<div class="a" style="left:16px;top:112px;width:5px;height:1px;background:#6a9955;opacity:.5"></div>
<div class="a" style="left:22px;top:112px;width:9px;height:1px;background:#6a9955;opacity:.5"></div>
<div class="a" style="left:32px;top:112px;width:8px;height:1px;background:#6a9955;opacity:.5"></div>
<div class="a" style="left:41px;top:112px;width:4px;height:1px;background:#6a9955;opacity:.5"></div>
<div class="a" style="left:46px;top:112px;width:3px;height:1px;background:#6a9955;opacity:.5"></div>
<div class="a" style="left:50px;top:112px;width:3px;height:1px;background:#6a9955;opacity:.5"></div>
<div class="a" style="left:54px;top:112px;width:5px;height:1px;background:#6a9955;opacity:.5"></div>
<div class="a" style="left:60px;top:112px;width:8px;height:1px;background:#6a9955;opacity:.5"></div>
<div class="a" style="left:69px;top:112px;width:12px;height:1px;background:#6a9955;opacity:.5"></div>
<div class="a" style="left:82px;top:112px;width:3px;height:1px;background:#6a9955;opacity:.5"></div>
<div class="a" style="left:86px;top:112px;width:4px;height:1px;background:#6a9955;opacity:.5"></div>
<div class="a" style="left:91px;top:112px;width:11px;height:1px;background:#6a9955;opacity:.5"></div>
<div class="a" style="left:103px;top:112px;width:8px;height:1px;background:#6a9955;opacity:.5"></div>
<div class="a" style="left:112px;top:112px;width:3px;height:1px;background:#6a9955;opacity:.5"></div>
<div class="a" style="left:116px;top:112px;width:4px;height:1px;background:#6a9955;opacity:.5"></div>
<div class="a" style="left:121px;top:112px;width:2px;height:1px;background:#6a9955;opacity:.5"></div>
<div class="a" style="left:124px;top:112px;width:8px;height:1px;background:#6a9955;opacity:.5"></div>
<div class="a" style="left:133px;top:112px;width:3px;height:1px;background:#6a9955;opacity:.5"></div>
<div class="a" style="left:137px;top:112px;width:5px;height:1px;background:#6a9955;opacity:.5"></div>
<div class="a" style="left:143px;top:112px;width:8px;height:1px;background:#6a9955;opacity:.5"></div>
<div class="a" style="left:152px;top:112px;width:11px;height:1px;background:#6a9955;opacity:.5"></div>
<div class="a" style="left:16px;top:114px;width:6px;height:1px;background:#d4d4d4;opacity:.5"></div>
<div class="a" style="left:22px;top:114px;width:1px;height:1px;background:#d4d4d4;opacity:.5"></div>
<div class="a" style="left:23px;top:114px;width:23px;height:1px;background:#d4d4d4;opacity:.5"></div>
<div class="a" style="left:46px;top:114px;width:1px;height:1px;background:#d4d4d4;opacity:.5"></div>
<div class="a" style="left:47px;top:114px;width:6px;height:1px;background:#d4d4d4;opacity:.5"></div>
<div class="a" style="left:53px;top:114px;width:1px;height:1px;background:#d4d4d4;opacity:.5"></div>
<div class="a" style="left:54px;top:114px;width:17px;height:1px;background:#d4d4d4;opacity:.5"></div>
<div class="a" style="left:71px;top:114px;width:1px;height:1px;background:#d4d4d4;opacity:.5"></div>
<div class="a" style="left:72px;top:114px;width:1px;height:1px;background:#d4d4d4;opacity:.5"></div>
<div class="a" style="left:73px;top:114px;width:1px;height:1px;background:#d4d4d4;opacity:.5"></div>
<div class="a" style="left:75px;top:114px;width:15px;height:1px;background:#d4d4d4;opacity:.5"></div>
<div class="a" style="left:91px;top:114px;width:1px;height:1px;background:#d4d4d4;opacity:.5"></div>
<div class="a" style="left:93px;top:114px;width:1px;height:1px;background:#d4d4d4;opacity:.5"></div>
<div class="a" style="left:94px;top:114px;width:1px;height:1px;background:#d4d4d4;opacity:.5"></div>
<div class="a" style="left:95px;top:114px;width:1px;height:1px;background:#d4d4d4;opacity:.5"></div>
<div class="a" style="left:16px;top:116px;width:7px;height:1px;background:#6a9955;opacity:.5"></div>
<div class="a" style="left:24px;top:116px;width:3px;height:1px;background:#6a9955;opacity:.5"></div>
<div class="a" style="left:28px;top:116px;width:10px;height:1px;background:#6a9955;opacity:.5"></div>
<div class="a" style="left:39px;top:116px;width:8px;height:1px;background:#6a9955;opacity:.5"></div>
<div class="a" style="left:48px;top:116px;width:3px;height:1px;background:#6a9955;opacity:.5"></div>
<div class="a" style="left:52px;top:116px;width:2px;height:1px;background:#6a9955;opacity:.5"></div>
<div class="a" style="left:55px;top:116px;width:11px;height:1px;background:#6a9955;opacity:.5"></div>
<div class="a" style="left:67px;top:116px;width:4px;height:1px;background:#6a9955;opacity:.5"></div>
<div class="a" style="left:72px;top:116px;width:2px;height:1px;background:#6a9955;opacity:.5"></div>
<div class="a" style="left:75px;top:116px;width:10px;height:1px;background:#6a9955;opacity:.5"></div>
<div class="a" style="left:86px;top:116px;width:2px;height:1px;background:#6a9955;opacity:.5"></div>
<div class="a" style="left:89px;top:116px;width:3px;height:1px;background:#6a9955;opacity:.5"></div>
<div class="a" style="left:93px;top:116px;width:3px;height:1px;background:#6a9955;opacity:.5"></div>
<div class="a" style="left:97px;top:116px;width:4px;height:1px;background:#6a9955;opacity:.5"></div>
<div class="a" style="left:102px;top:116px;width:4px;height:1px;background:#6a9955;opacity:.5"></div>
<div class="a" style="left:107px;top:116px;width:5px;height:1px;background:#6a9955;opacity:.5"></div>
<div class="a" style="left:113px;top:116px;width:4px;height:1px;background:#6a9955;opacity:.5"></div>
<div class="a" style="left:118px;top:116px;width:11px;height:1px;background:#6a9955;opacity:.5"></div>
<div class="a" style="left:130px;top:116px;width:5px;height:1px;background:#6a9955;opacity:.5"></div>
<div class="a" style="left:136px;top:116px;width:3px;height:1px;background:#6a9955;opacity:.5"></div>
<div class="a" style="left:140px;top:116px;width:3px;height:1px;background:#6a9955;opacity:.5"></div>
<div class="a" style="left:144px;top:116px;width:2px;height:1px;background:#6a9955;opacity:.5"></div>
<div class="a" style="left:147px;top:116px;width:4px;height:1px;background:#6a9955;opacity:.5"></div>
<div class="a" style="left:16px;top:118px;width:6px;height:1px;background:#d4d4d4;opacity:.5"></div>
<div class="a" style="left:22px;top:118px;width:1px;height:1px;background:#d4d4d4;opacity:.5"></div>
<div class="a" style="left:23px;top:118px;width:23px;height:1px;background:#d4d4d4;opacity:.5"></div>
<div class="a" style="left:46px;top:118px;width:1px;height:1px;background:#d4d4d4;opacity:.5"></div>
<div class="a" style="left:47px;top:118px;width:6px;height:1px;background:#d4d4d4;opacity:.5"></div>
<div class="a" style="left:53px;top:118px;width:1px;height:1px;background:#d4d4d4;opacity:.5"></div>
<div class="a" style="left:54px;top:118px;width:18px;height:1px;background:#d4d4d4;opacity:.5"></div>
<div class="a" style="left:72px;top:118px;width:1px;height:1px;background:#d4d4d4;opacity:.5"></div>
<div class="a" style="left:73px;top:118px;width:1px;height:1px;background:#d4d4d4;opacity:.5"></div>
<div class="a" style="left:74px;top:118px;width:1px;height:1px;background:#d4d4d4;opacity:.5"></div>
<div class="a" style="left:75px;top:118px;width:1px;height:1px;background:#d4d4d4;opacity:.5"></div>
<div class="a" style="left:16px;top:120px;width:6px;height:1px;background:#6a9955;opacity:.5"></div>
<div class="a" style="left:23px;top:120px;width:4px;height:1px;background:#6a9955;opacity:.5"></div>
<div class="a" style="left:28px;top:120px;width:3px;height:1px;background:#6a9955;opacity:.5"></div>
<div class="a" style="left:32px;top:120px;width:11px;height:1px;background:#6a9955;opacity:.5"></div>
<div class="a" style="left:44px;top:120px;width:6px;height:1px;background:#6a9955;opacity:.5"></div>
<div class="a" style="left:51px;top:120px;width:5px;height:1px;background:#6a9955;opacity:.5"></div>
<div class="a" style="left:57px;top:120px;width:4px;height:1px;background:#6a9955;opacity:.5"></div>
<div class="a" style="left:62px;top:120px;width:3px;height:1px;background:#6a9955;opacity:.5"></div>
<div class="a" style="left:66px;top:120px;width:4px;height:1px;background:#6a9955;opacity:.5"></div>
<div class="a" style="left:71px;top:120px;width:3px;height:1px;background:#6a9955;opacity:.5"></div>
<div class="a" style="left:75px;top:120px;width:10px;height:1px;background:#6a9955;opacity:.5"></div>
<div class="a" style="left:86px;top:120px;width:4px;height:1px;background:#6a9955;opacity:.5"></div>
<div class="a" style="left:91px;top:120px;width:10px;height:1px;background:#6a9955;opacity:.5"></div>
<div class="a" style="left:102px;top:120px;width:11px;height:1px;background:#6a9955;opacity:.5"></div>
<div class="a" style="left:114px;top:120px;width:3px;height:1px;background:#6a9955;opacity:.5"></div>
<div class="a" style="left:118px;top:120px;width:2px;height:1px;background:#6a9955;opacity:.5"></div>
<div class="a" style="left:121px;top:120px;width:8px;height:1px;background:#6a9955;opacity:.5"></div>
<div class="a" style="left:130px;top:120px;width:2px;height:1px;background:#6a9955;opacity:.5"></div>
<div class="a" style="left:133px;top:120px;width:5px;height:1px;background:#6a9955;opacity:.5"></div>
<div class="a" style="left:139px;top:120px;width:7px;height:1px;background:#6a9955;opacity:.5"></div>
<div class="a" style="left:147px;top:120px;width:3px;height:1px;background:#6a9955;opacity:.5"></div>
<div class="a" style="left:151px;top:120px;width:3px;height:1px;background:#6a9955;opacity:.5"></div>
<div class="a" style="left:155px;top:120px;width:5px;height:1px;background:#6a9955;opacity:.5"></div>
<div class="a" style="left:16px;top:122px;width:6px;height:1px;background:#d4d4d4;opacity:.5"></div>
<div class="a" style="left:22px;top:122px;width:1px;height:1px;background:#d4d4d4;opacity:.5"></div>
<div class="a" style="left:23px;top:122px;width:18px;height:1px;background:#d4d4d4;opacity:.5"></div>
<div class="a" style="left:41px;top:122px;width:1px;height:1px;background:#d4d4d4;opacity:.5"></div>
<div class="a" style="left:42px;top:122px;width:7px;height:1px;background:#569cd6;opacity:.5"></div>
<div class="a" style="left:49px;top:122px;width:1px;height:1px;background:#d4d4d4;opacity:.5"></div>
<div class="a" style="left:50px;top:122px;width:4px;height:1px;background:#569cd6;opacity:.5"></div>
<div class="a" style="left:54px;top:122px;width:1px;height:1px;background:#d4d4d4;opacity:.5"></div>
<div class="a" style="left:55px;top:122px;width:1px;height:1px;background:#d4d4d4;opacity:.5"></div>
<div class="a" style="left:56px;top:122px;width:7px;height:1px;background:#d4d4d4;opacity:.5"></div>
<div class="a" style="left:63px;top:122px;width:1px;height:1px;background:#d4d4d4;opacity:.5"></div>
<div class="a" style="left:64px;top:122px;width:1px;height:1px;background:#d4d4d4;opacity:.5"></div>
<div class="a" style="left:12px;top:124px;width:1px;height:1px;background:#d4d4d4;opacity:.5"></div>
<div class="a" style="left:12px;top:126px;width:8px;height:1px;background:#569cd6;opacity:.5"></div>
<div class="a" style="left:21px;top:126px;width:13px;height:1px;background:#d4d4d4;opacity:.5"></div>
<div class="a" style="left:34px;top:126px;width:1px;height:1px;background:#d4d4d4;opacity:.5"></div>
<div class="a" style="left:35px;top:126px;width:1px;height:1px;background:#d4d4d4;opacity:.5"></div>
<div class="a" style="left:37px;top:126px;width:6px;height:1px;background:#3ec58e;opacity:.5"></div>
<div class="a" style="left:44px;top:126px;width:9px;height:1px;background:#d4d4d4;opacity:.5"></div>
<div class="a" style="left:54px;top:126px;width:1px;height:1px;background:#d4d4d4;opacity:.5"></div>
<div class="a" style="left:16px;top:128px;width:7px;height:1px;background:#569cd6;opacity:.5"></div>
<div class="a" style="left:23px;top:128px;width:1px;height:1px;background:#d4d4d4;opacity:.5"></div>
<div class="a" style="left:24px;top:128px;width:4px;height:1px;background:#569cd6;opacity:.5"></div>
<div class="a" style="left:28px;top:128px;width:1px;height:1px;background:#d4d4d4;opacity:.5"></div>
<div class="a" style="left:29px;top:128px;width:1px;height:1px;background:#d4d4d4;opacity:.5"></div>
<div class="a" style="left:30px;top:128px;width:8px;height:1px;background:#d4d4d4;opacity:.5"></div>
<div class="a" style="left:38px;top:128px;width:1px;height:1px;background:#d4d4d4;opacity:.5"></div>
<div class="a" style="left:39px;top:128px;width:7px;height:1px;background:#569cd6;opacity:.5"></div>
<div class="a" style="left:46px;top:128px;width:1px;height:1px;background:#d4d4d4;opacity:.5"></div>
<div class="a" style="left:47px;top:128px;width:4px;height:1px;background:#569cd6;opacity:.5"></div>
<div class="a" style="left:51px;top:128px;width:1px;height:1px;background:#d4d4d4;opacity:.5"></div>
<div class="a" style="left:52px;top:128px;width:1px;height:1px;background:#d4d4d4;opacity:.5"></div>
<div class="a" style="left:53px;top:128px;width:7px;height:1px;background:#d4d4d4;opacity:.5"></div>
<div class="a" style="left:60px;top:128px;width:1px;height:1px;background:#d4d4d4;opacity:.5"></div>
<div class="a" style="left:61px;top:128px;width:1px;height:1px;background:#d4d4d4;opacity:.5"></div>
<div class="a" style="left:63px;top:128px;width:1px;height:1px;background:#d4d4d4;opacity:.5"></div>
<div class="a" style="left:64px;top:128px;width:1px;height:1px;background:#d4d4d4;opacity:.5"></div>
<div class="a" style="left:66px;top:128px;width:8px;height:1px;background:#d4d4d4;opacity:.5"></div>
<div class="a" style="left:75px;top:128px;width:3px;height:1px;background:#d4d4d4;opacity:.5"></div>
<div class="a" style="left:79px;top:128px;width:1px;height:1px;background:#d4d4d4;opacity:.5"></div>
<div class="a" style="left:81px;top:128px;width:8px;height:1px;background:#d4d4d4;opacity:.5"></div>
<div class="a" style="left:90px;top:128px;width:6px;height:1px;background:#d4d4d4;opacity:.5"></div>
<div class="a" style="left:97px;top:128px;width:3px;height:1px;background:#d4d4d4;opacity:.5"></div>
<div class="a" style="left:16px;top:130px;width:7px;height:1px;background:#569cd6;opacity:.5"></div>
<div class="a" style="left:24px;top:130px;width:6px;height:1px;background:#d4d4d4;opacity:.5"></div>
<div class="a" style="left:31px;top:130px;width:1px;height:1px;background:#d4d4d4;opacity:.5"></div>
<div class="a" style="left:33px;top:130px;width:4px;height:1px;background:#d4d4d4;opacity:.5"></div>
<div class="a" style="left:37px;top:130px;width:1px;height:1px;background:#d4d4d4;opacity:.5"></div>
<div class="a" style="left:38px;top:130px;width:7px;height:1px;background:#d4d4d4;opacity:.5"></div>
<div class="a" style="left:45px;top:130px;width:1px;height:1px;background:#d4d4d4;opacity:.5"></div>
<div class="a" style="left:16px;top:132px;width:7px;height:1px;background:#569cd6;opacity:.5"></div>
<div class="a" style="left:23px;top:132px;width:1px;height:1px;background:#d4d4d4;opacity:.5"></div>
<div class="a" style="left:24px;top:132px;width:5px;height:1px;background:#d4d4d4;opacity:.5"></div>
<div class="a" style="left:29px;top:132px;width:1px;height:1px;background:#d4d4d4;opacity:.5"></div>
<div class="a" style="left:30px;top:132px;width:1px;height:1px;background:#d4d4d4;opacity:.5"></div>
<div class="a" style="left:31px;top:132px;width:8px;height:1px;background:#d4d4d4;opacity:.5"></div>
<div class="a" style="left:39px;top:132px;width:1px;height:1px;background:#d4d4d4;opacity:.5"></div>
<div class="a" style="left:40px;top:132px;width:6px;height:1px;background:#d4d4d4;opacity:.5"></div>
<div class="a" style="left:46px;top:132px;width:1px;height:1px;background:#d4d4d4;opacity:.5"></div>
<div class="a" style="left:47px;top:132px;width:1px;height:1px;background:#d4d4d4;opacity:.5"></div>
<div class="a" style="left:12px;top:134px;width:1px;height:1px;background:#d4d4d4;opacity:.5"></div>
<div class="a" style="left:8px;top:136px;width:1px;height:1px;background:#d4d4d4;opacity:.5"></div>
<div class="a" style="left:119px;top:0;width:1px;height:552px;background:#3a3c52"></div>
</div>
<div class="a" style="left:1426px;top:236px;width:3px;height:5px;background:#8a8c9c"></div>
<!-- topright arrow -->
<svg style="left:1418px;top:9px" width="11" height="9" viewBox="0 0 11 9"><path d="M1 4.5 L11 4.5 M4.5 1 L1 4.5 L4.5 8" fill="none" stroke="#c8cce0" stroke-width="1.8"/></svg>

<!-- status bar -->
<div class="a" style="left:372px;top:586px;width:1057px;height:24px;background:#2a2c3f"></div>
<div class="a" style="left:372px;top:610px;width:1057px;height:1px;background:#262838"></div>
<div class="t" style="left:1053px;top:590px;font-size:13.3px;font-style:italic;color:#c4c6da;letter-spacing:0px">ContractDefinition</div>
<div class="t" style="left:1163px;top:590px;font-size:13.3px;color:#c4c6da;letter-spacing:0px">InitiateFlashLoan</div>
<svg style="left:1269px;top:591px" width="14" height="12" viewBox="0 0 14 12"><path d="M8 0 L14 5 L8 10 L8 7 Q3 7 0 12 Q1 4 8 3 Z" fill="#c8cce0"/></svg>
<div class="t" style="left:1302px;top:590px;font-size:13.3px;color:#c4c6da;letter-spacing:-0.2px">0 reference(s)</div>
<svg style="left:1388px;top:592px" width="11" height="8" viewBox="0 0 11 8"><path d="M1 7 L5.5 2 L10 7" fill="none" stroke="#c8cce0" stroke-width="2"/></svg>
<svg style="left:1409px;top:592px" width="11" height="8" viewBox="0 0 11 8"><path d="M1 1 L5.5 6 L10 1" fill="none" stroke="#c8cce0" stroke-width="2"/></svg>

<!-- terminal header -->
<div class="a" style="left:372px;top:611px;width:1057px;height:34px;background:#2a2c3f"></div>
<svg style="left:379px;top:622px" width="10" height="11" viewBox="0 0 10 11"><path d="M1 1 L5 4.5 L9 1 M1 6 L5 9.5 L9 6" fill="none" stroke="#a8b0d8" stroke-width="2"/></svg>
<svg style="left:403px;top:622px" width="13" height="12" viewBox="0 0 13 12"><circle cx="6.3" cy="6" r="4.8" fill="none" stroke="#a8b0d8" stroke-width="2"/><path d="M3 2.7 L9.6 9.3" stroke="#a8b0d8" stroke-width="2"/></svg>
<div class="t" style="left:431px;top:622px;font-size:13px;color:#a2a3bd">0</div>
<div class="a" style="left:463px;top:620px;width:16px;height:16px;border:1px solid #595c76;border-radius:3px;background:#2a2c3f"></div>
<div class="t" style="left:487px;top:623px;font-size:13.5px;color:#a2a3bd;letter-spacing:-0.1px">listen on network</div>
<svg style="left:624px;top:622px" width="13" height="12" viewBox="0 0 13 12"><circle cx="5" cy="5" r="3.8" fill="none" stroke="#a8b0d8" stroke-width="2"/><path d="M7.8 7.8 L11.5 11.5" stroke="#a8b0d8" stroke-width="2.5"/></svg>
<div class="a" style="left:652px;top:615px;width:282px;height:26px;background:#35384c;border:1px solid #43465c;border-radius:2px"></div>
<div class="t" style="left:665px;top:621px;font-size:13.8px;color:#8e90a8;letter-spacing:-0.05px">Search with transaction hash or address</div>

<!-- terminal body -->
<div class="a" style="left:370px;top:645px;width:1059px;height:113px;background:#222336"></div>
<svg style="left:396px;top:682px" width="20" height="20" viewBox="0 0 20 20"><circle cx="10" cy="10" r="10" fill="#2ebf7c"/><path d="M5.3 10.2 L8.6 13.4 L14.8 7" fill="none" stroke="#1e2030" stroke-width="2.4"/></svg>
<div class="t" style="left:435px;top:688px;font-family:'Liberation Mono',monospace;font-size:11px;color:#b4b6cc;-webkit-text-stroke:0.4px #b4b6cc;letter-spacing:-0.08px">[block: txIndex:]&nbsp; from: 0x34F...08af6 to: InitiateFlashLoan.(constructor) value: 0 wei data: 0x608...00000 logs: 0 hash:</div>
<div class="a" style="left:1335px;top:678px;width:51px;height:28px;background:#007aa6;border-radius:3px"></div>
<div class="t" style="left:1343px;top:687px;font-size:11.5px;font-weight:bold;color:#fff;letter-spacing:-0.2px">Debug</div>
<svg style="left:1396px;top:687px" width="13" height="9" viewBox="0 0 13 9"><path d="M1.5 1.5 L6.5 7 L11.5 1.5" fill="none" stroke="#a8b0d8" stroke-width="2.6"/></svg>
<svg style="left:377px;top:738px" width="7" height="9" viewBox="0 0 7 9"><path d="M1 1 L5.5 4.5 L1 8" fill="none" stroke="#e0e2f0" stroke-width="1.8"/></svg>
<div class="a" style="left:0;top:758px;width:1429px;height:1px;background:#1f3a40"></div>
<div class="a" style="left:295px;top:758px;width:48px;height:1px;background:#6b7a80"></div>

<!-- metamask popup -->
<div class="a" id="mm" style="left:946px;top:0;width:357px;height:565px;background:#ffffff;overflow:hidden">
  <div class="a" style="left:0;top:0;width:357px;height:147px;background:#f2f3f4"></div>
  <div class="a" style="left:0;top:147px;width:357px;height:1px;background:#d6d9dc"></div>
  <!-- fox -->
  <svg style="left:17px;top:-9px" width="33" height="25" viewBox="0 0 33 25">
    <path d="M0 16 L3 6 L9 1 L24 1 L30 6 L33 16 L31 24 L22 21 L11 21 L2 24 Z" fill="#f5841f"/>
    <path d="M9 12 L16.5 22 L24 12 L20 10 L13 10 Z" fill="#e2761b"/>
    <path d="M11 21 L16.5 25 L22 21 L19 19 L14 19 Z" fill="#d7c1b3"/>
    <path d="M14 18 L19 18 L16.5 21 Z" fill="#161616"/>
    <path d="M2 24 L11 21 L7 14 Z" fill="#e4761b"/><path d="M31 24 L22 21 L26 14 Z" fill="#e4761b"/>
    <circle cx="11" cy="13" r="1.1" fill="#233447"/><circle cx="22" cy="13" r="1.1" fill="#233447"/>
  </svg>
  <!-- network pill -->
  <div class="a" style="left:108px;top:-20px;width:177px;height:38px;border:1px solid #bbc0c5;border-radius:19px"></div>
  <div class="a" style="left:117px;top:-5px;width:12px;height:12px;border-radius:50%;background:#6a737d"></div>
  <div class="t" style="left:137px;top:-7px;font-size:13px;color:#6a737d;letter-spacing:-0.1px">Binance Smart Chain</div>
  <svg style="left:266px;top:-4px" width="9" height="8" viewBox="0 0 9 8"><path d="M1 2 L4.5 6 L8 2" fill="none" stroke="#6a737d" stroke-width="1.5"/></svg>
  <!-- account avatar -->
  <div class="a" style="left:301px;top:-20px;width:40px;height:41px;border-radius:50%;border:2px solid #037dd6;background:#fff;overflow:hidden">
    <div class="a" style="left:2px;top:2px;width:32px;height:33px;border-radius:50%;background:#f1b800;overflow:hidden">
      <div class="a" style="left:-8px;top:-6px;width:14px;height:30px;background:#0b4a5c;transform:rotate(12deg)"></div>
      <div class="a" style="left:4px;top:-8px;width:5px;height:40px;background:#fa6400;transform:rotate(16deg)"></div>
      <div class="a" style="left:2px;top:24px;width:14px;height:12px;background:#fa6400;transform:rotate(20deg)"></div>
      <div class="a" style="left:14px;top:27px;width:22px;height:14px;background:#f5135a;transform:rotate(22deg)"></div>
    </div>
  </div>
  <div class="t" style="left:135px;top:55px;font-size:18.5px;color:#141618;letter-spacing:0.1px">Send to</div>
  <div class="t" style="left:285px;top:57px;font-size:12.8px;color:#037dd6;letter-spacing:0.2px">Cancel</div>
  <!-- search box -->
  <div class="a" style="left:8px;top:87px;width:341px;height:52px;border:1px solid #9fa6ae;border-radius:9px;background:#fff"></div>
  <svg style="left:22px;top:105px" width="16" height="16" viewBox="0 0 16 16"><circle cx="7" cy="7" r="5.6" fill="none" stroke="#111" stroke-width="1.6"/><path d="M11 11 L14.6 14.6" stroke="#111" stroke-width="1.8"/></svg>
  <div class="t" style="left:49px;top:106px;font-size:14px;color:#bbc0c5;letter-spacing:0.05px">Search, public address (0x), or ENS</div>
  <svg style="left:312px;top:100px" width="25" height="25" viewBox="0 0 25 25" fill="none" stroke="#037dd6" stroke-width="2.2" stroke-linecap="round" stroke-linejoin="round"><path d="M1.5 6.5 L1.5 3 Q1.5 1.5 3 1.5 L6.5 1.5 M17.5 1.5 L21 1.5 Q22.5 1.5 22.5 3 L22.5 6.5 M22.5 17.5 L22.5 21 Q22.5 22.5 21 22.5 L17.5 22.5 M6.5 22.5 L3 22.5 Q1.5 22.5 1.5 21 L1.5 17.5"/><rect x="8" y="8" width="9" height="9.5" rx="1.5"/></svg>
  <div class="t" style="left:17px;top:167px;font-size:16.5px;color:#037dd6;letter-spacing:0.15px">Transfer between my accounts</div>
  <!-- recents -->
  <div class="a" style="left:0;top:203px;width:357px;height:2px;background:#d6d9dc"></div>
  <div class="a" style="left:0;top:205px;width:357px;height:30px;background:#f2f3f4"></div>
  <div class="t" style="left:16px;top:215px;font-size:10px;color:#535a61;letter-spacing:0.1px">Recents</div>
  <div class="a" style="left:0;top:235px;width:357px;height:1px;background:#d6d9dc"></div>
  <div class="a" style="left:16px;top:248px;width:28px;height:28px;border-radius:50%;background:#f26602;overflow:hidden">
    <div class="a" style="left:12px;top:4px;width:14px;height:28px;background:#c81539;transform:rotate(-15deg)"></div>
    <div class="a" style="left:18px;top:-6px;width:14px;height:18px;background:#2346d6;transform:rotate(-35deg)"></div>
  </div>
  <div class="t" style="left:60px;top:254px;font-size:14px;color:#24272a;letter-spacing:-0.5px">0x317D...6f71</div>
  <div class="a" style="left:0;top:288px;width:357px;height:1px;background:#d6d9dc"></div>
  <div class="a" style="left:16px;top:301px;width:28px;height:28px;border-radius:50%;background:#0e9888;overflow:hidden">
    <div class="a" style="left:-6px;top:-8px;width:18px;height:18px;background:#f7300d;transform:rotate(30deg)"></div>
    <div class="a" style="left:15px;top:-6px;width:18px;height:14px;background:#0a5e58;transform:rotate(35deg)"></div>
    <div class="a" style="left:7px;top:6px;width:17px;height:18px;background:#f5a80a;transform:rotate(-35deg)"></div>
  </div>
  <div class="t" style="left:60px;top:307px;font-size:14px;color:#24272a;letter-spacing:0.1px">0x3f1f...fb00</div>
  <div class="a" style="left:0;top:341px;width:357px;height:1px;background:#d6d9dc"></div>
  <div class="t" style="left:9px;top:352px;font-size:12px;color:#037dd6;letter-spacing:0.1px">Load More</div>
  <div class="a" style="left:1px;top:362px;width:355px;height:12px;border:1px solid #d6d9dc;border-top:none;border-radius:0 0 8px 8px"></div>
</div>
<!-- annotation paste here -->
<div class="a" style="left:951px;top:74px;width:348px;height:85px;border:3px solid #ff0000;border-radius:2px"></div>
<svg style="left:1190px;top:140px" width="80" height="110" viewBox="0 0 80 110"><path d="M70.5 101 L13 13" stroke="#ff0000" stroke-width="3" stroke-linecap="round"/><path d="M9.6 5.8 L13.2 19.5 L21.6 15 Z" fill="#ff0000" stroke="#ff0000" stroke-width="0.8" stroke-linejoin="round"/></svg>
<div class="t" style="left:1257px;top:207px;font-size:14px;color:#ff0000;-webkit-text-stroke:0.3px #ff0000;letter-spacing:0.35px">paste here</div>

</body></html>
